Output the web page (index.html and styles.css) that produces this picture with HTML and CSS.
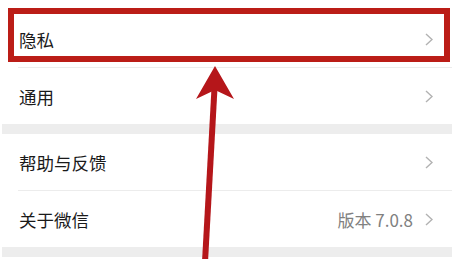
FILE: index.html
```html
<!DOCTYPE html>
<html lang="zh-CN">
<head>
    <meta charset="UTF-8">
    <meta name="viewport" content="width=device-width, initial-scale=1.0">
    <title>设置</title>
    <link rel="stylesheet" href="styles.css">
</head>
<body>
    <div id="stage">
        <div id="settings-list">
            <div class="group">
                <div class="row">
                    <span class="row-title">隐私</span>
                    <svg class="chevron" viewBox="0 0 8 13"><polyline points="1,1 7,6.5 1,12"/></svg>
                </div>
                <div class="row">
                    <span class="row-title">通用</span>
                    <svg class="chevron" viewBox="0 0 8 13"><polyline points="1,1 7,6.5 1,12"/></svg>
                </div>
            </div>
            <div class="gap"></div>
            <div class="group">
                <div class="row">
                    <span class="row-title">帮助与反馈</span>
                    <svg class="chevron" viewBox="0 0 8 13"><polyline points="1,1 7,6.5 1,12"/></svg>
                </div>
                <div class="row">
                    <span class="row-title">关于微信</span>
                    <span class="row-value">版本 7.0.8</span>
                    <svg class="chevron" viewBox="0 0 8 13"><polyline points="1,1 7,6.5 1,12"/></svg>
                </div>
            </div>
            <div class="gap"></div>
        </div>

        <!-- annotation over the screenshot -->
        <div id="highlight"></div>
        <svg id="arrow" viewBox="0 0 461 259">
            <line x1="214.5" y1="88" x2="205" y2="262"/>
            <path d="M215 66 L234 99 L215 90 L196 99 Z"/>
        </svg>
    </div>
</body>
</html>
```

FILE: styles.css
```css
body
{
    margin: 0;
    background: #fff;
    font-family: "Noto Sans CJK SC", "Noto Sans", sans-serif;
}

#stage
{
    position: relative;
    width: 461px;
    height: 259px;
    overflow: hidden;
}

#settings-list
{
    width: 450px;
    margin-left: 2px;
    padding-top: 11px;
}

.group
{
    background: #fff;
}

.row
{
    display: flex;
    align-items: center;
    height: 56px;
    padding: 0 19px 0 17px;
    margin-left: 0;
    position: relative;
}

.row + .row
{
    border-top: 1px solid #ececec;
    margin-left: 16px;
    padding-left: 1px;
}

.row-title
{
    flex: 1;
    font-size: 17.5px;
    color: #1a1a1a;
}

.row-value
{
    font-size: 17px;
    color: #808080;
    margin-right: 12px;
}

.chevron
{
    width: 8px;
    height: 13px;
    fill: none;
    stroke: #b2b2b2;
    stroke-width: 1.4;
}

.gap
{
    height: 10px;
    background: #ededed;
}

#highlight
{
    position: absolute;
    left: 8px;
    top: 8px;
    width: 442px;
    height: 54px;
    border: 6px solid #bb1d17;
    box-sizing: border-box;
}

#arrow
{
    position: absolute;
    left: 0;
    top: 0;
    width: 461px;
    height: 259px;
}

#arrow line
{
    stroke: #b5161a;
    stroke-width: 6;
}

#arrow path
{
    fill: #b5161a;
}
```
